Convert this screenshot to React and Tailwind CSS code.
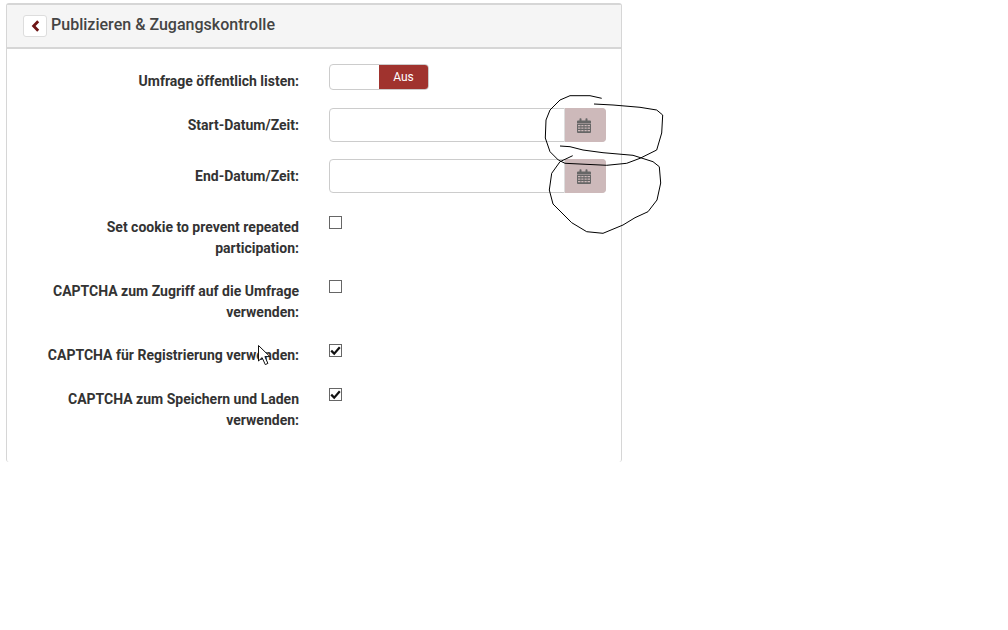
const font = { fontFamily: "Roboto, sans-serif" };

function Calendar() {
  return (
    <svg width="14" height="15" viewBox="0 0 14 15" fill="none">
      <path d="M0 3.5a1 1 0 0 1 1-1h1.5V1a.8.8 0 0 1 .8-.8h.4a.8.8 0 0 1 .8.8v1.5h4V1a.8.8 0 0 1 .8-.8h.4a.8.8 0 0 1 .8.8v1.5H13a1 1 0 0 1 1 1V5H0Z" fill="#666" />
      <path fillRule="evenodd" clipRule="evenodd" d="M0 5.5h14V14a1 1 0 0 1-1 1H1a1 1 0 0 1-1-1Z M1 7v1.3h2.5V7Z M4.3 7v1.3h2.2V7Z M7.5 7v1.3h2.2V7Z M10.5 7v1.3H13V7Z M1 9.5v1.3h2.5V9.5Z M4.3 9.5v1.3h2.2V9.5Z M7.5 9.5v1.3h2.2V9.5Z M10.5 9.5v1.3H13V9.5Z M1 12v1.3h2.5V12Z M4.3 12v1.3h2.2V12Z M7.5 12v1.3h2.2V12Z M10.5 12v1.3H13V12Z" fill="#666" />
    </svg>
  );
}

function DateInput() {
  return (
    <div className="flex h-[34px] w-[277px] rounded-[4px] border border-[#ccc] bg-white">
      <div className="flex-1" />
      <div className="-my-px -mr-px flex w-[42px] items-center justify-center rounded-r-[4px] border-l border-[#ddd] bg-[#cdb9ba] pr-[3px]">
        <Calendar />
      </div>
    </div>
  );
}

function Checkbox({ checked }) {
  return (
    <div className="flex h-[13px] w-[13px] items-center justify-center border border-[#666] bg-white">
      {checked && (
        <svg width="11" height="11" viewBox="0 0 11 11" fill="none">
          <path d="M1.2 5.6 4.2 8.6 9.8 2.2" stroke="#111" strokeWidth="2.2" />
        </svg>
      )}
    </div>
  );
}

function Row({ label, pad, children, className }) {
  return (
    <div className={"flex " + className}>
      <div className={"w-[292px] shrink-0 text-right text-[14px] leading-[21px] font-bold text-[#333] " + pad}>
        {label}
      </div>
      <div className="ml-[30px]">{children}</div>
    </div>
  );
}

export default function App() {
  return (
    <div className="relative h-[630px] w-[1008px] overflow-hidden bg-white" style={font}>
      <div className="ml-[6px] mt-[3px] h-[459px] w-[616px] rounded-[3px] border border-t-2 border-b-0 border-[#d6d6d6] bg-white">
        <div className="flex h-[44px] items-center border-b-2 border-[#d6d6d6] bg-[#f5f5f5] pl-[16px]">
          <div className="flex h-[22px] w-[24px] items-center justify-center rounded-[3px] border border-[#ddd] bg-white">
            <svg width="9" height="12" viewBox="0 0 9 12" fill="none">
              <path d="M7.2 1.2 2.6 6l4.6 4.8" stroke="#6d1414" strokeWidth="2.8" />
            </svg>
          </div>
          <div className="ml-[4px] -mt-[2px] text-[16px] leading-[22px] font-medium tracking-[0.02px] text-[#444]">
            Publizieren &amp; Zugangskontrolle
          </div>
        </div>

        <Row label="Umfrage öffentlich listen:" pad="pt-[7px]" className="mt-[15px]">
          <div className="flex h-[26px] w-[100px] overflow-hidden rounded-[4px] border border-[#ccc] bg-white">
            <div className="w-[49px]" />
            <div className="flex flex-1 items-center justify-center bg-[#a0332e] text-[12px] font-normal text-white">
              Aus
            </div>
          </div>
        </Row>
        <Row label="Start-Datum/Zeit:" pad="pt-[7px]" className="mt-[16px]">
          <DateInput />
        </Row>
        <Row label="End-Datum/Zeit:" pad="pt-[7px]" className="mt-[17px]">
          <DateInput />
        </Row>
        <Row
          label={<>Set cookie to prevent repeated<br />participation:</>}
          pad="pt-[6px]"
          className="mt-[18px]"
        >
          <div className="pt-[5px]"><Checkbox /></div>
        </Row>
        <Row
          label={<>CAPTCHA zum Zugriff auf die Umfrage<br />verwenden:</>}
          pad="pt-[6px]"
          className="mt-[16px]"
        >
          <div className="pt-[5px]"><Checkbox /></div>
        </Row>
        <Row label="CAPTCHA für Registrierung verwenden:" pad="pt-[6px]" className="mt-[16px]">
          <div className="pt-[5px]"><Checkbox checked /></div>
        </Row>
        <Row
          label={<>CAPTCHA zum Speichern und Laden<br />verwenden:</>}
          pad="pt-[6px]"
          className="mt-[17px]"
        >
          <div className="pt-[5px]"><Checkbox checked /></div>
        </Row>
      </div>

      <svg className="pointer-events-none absolute left-0 top-0" width="1008" height="630" fill="none">
        <path
          d="M601.7 98.3 590 95.7 570 95.7 560 100 550 110 546 120 545.3 138 550 151.7 558.3 160 565 163.3 606.7 165.3 626.7 163.3 640 158.3 656.7 150 661.7 133 662.7 115 656.7 110 640 107.3 613 105 594 104"
          stroke="#000"
          strokeWidth="1"
          strokeLinejoin="round"
        />
        <path
          d="M560 146 570 146.7 583 150 603 152.7 633 155.3 653 161.7 659.3 166.7 660.7 183 657 200 648 211.7 635 217.7 623 225 603 233.3 586.7 231.7 571.7 222.7 553 204 549.3 190 551.7 173.3 560 161.7 572.7 155.7"
          stroke="#000"
          strokeWidth="1"
          strokeLinejoin="round"
        />
        <path
          d="M258.5 345.5V361l3.6-3.4 3.2 7 2.6-1.2-3-6.8h5Z"
          fill="#fff"
          stroke="#111"
          strokeWidth="1"
        />
      </svg>
    </div>
  );
}
